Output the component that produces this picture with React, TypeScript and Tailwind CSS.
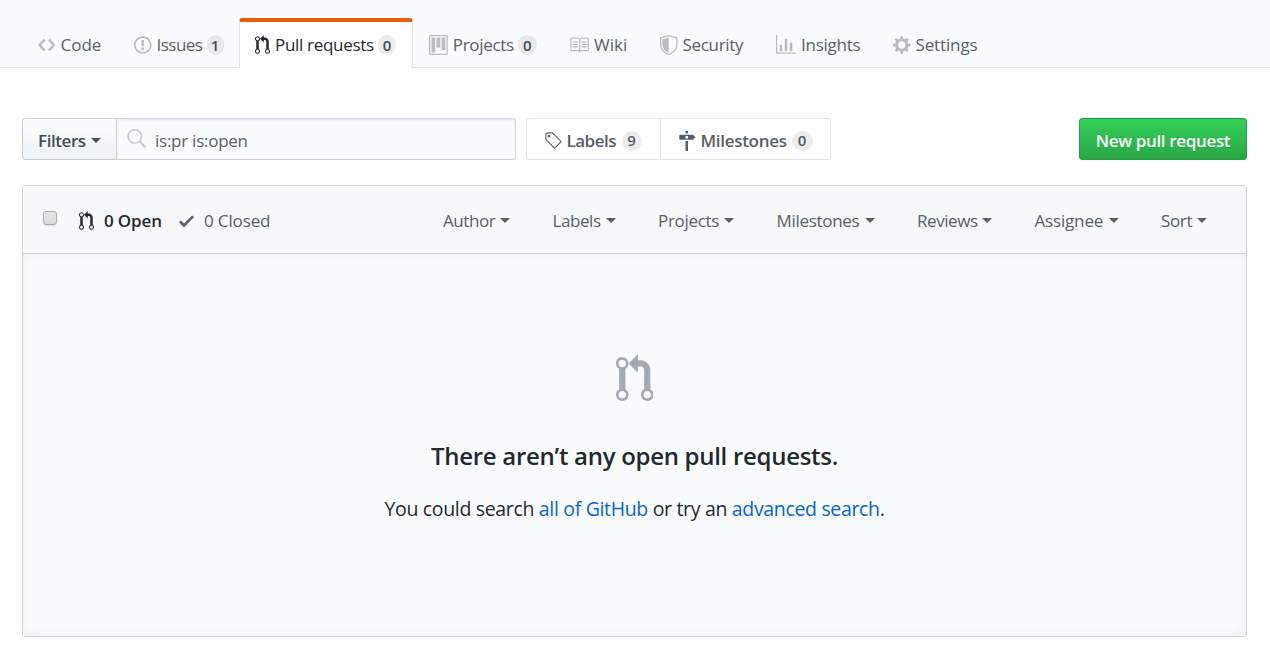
import React from 'react';

const ICONS = {
  code: { w: 14, d: 'M9.5 3L8 4.5 11.5 8 8 11.5 9.5 13 14 8 9.5 3zm-5 0L0 8l4.5 5L6 11.5 2.5 8 6 4.5 4.5 3z' },
  issue: { w: 14, d: 'M7 2.3c3.14 0 5.7 2.56 5.7 5.7s-2.56 5.7-5.7 5.7A5.71 5.71 0 0 1 1.3 8c0-3.14 2.56-5.7 5.7-5.7zM7 1C3.14 1 0 4.14 0 8s3.14 7 7 7 7-3.14 7-7-3.14-7-7-7zm1 3H6v5h2V4zm0 6H6v2h2v-2z' },
  pull: { w: 12, d: 'M11 11.28V5c-.03-.78-.34-1.47-.94-2.06C9.46 2.35 8.78 2.03 8 2H7V0L4 3l3 3V4h1c.27.02.48.11.69.31.21.2.3.42.31.69v6.28A1.993 1.993 0 0 0 10 15a1.993 1.993 0 0 0 1-3.72zm-1 2.92c-.66 0-1.2-.55-1.2-1.2 0-.65.55-1.2 1.2-1.2.65 0 1.2.55 1.2 1.2 0 .65-.55 1.2-1.2 1.2zM4 3c0-1.11-.89-2-2-2a1.993 1.993 0 0 0-1 3.72v6.56A1.993 1.993 0 0 0 2 15a1.993 1.993 0 0 0 1-3.72V4.72c.59-.34 1-.98 1-1.72zm-.8 10c0 .66-.55 1.2-1.2 1.2-.65 0-1.2-.55-1.2-1.2 0-.65.55-1.2 1.2-1.2.65 0 1.2.55 1.2 1.2zM2 4.2C1.34 4.2.8 3.65.8 3c0-.65.55-1.2 1.2-1.2.65 0 1.2.55 1.2 1.2 0 .65-.55 1.2-1.2 1.2z' },
  project: { w: 15, d: 'M10 12h3V2h-3v10zm-4-2h3V2H6v8zm-4 4h3V2H2v12zm-1 1h13V1H1v14zM14 0H1a1 1 0 0 0-1 1v14a1 1 0 0 0 1 1h13a1 1 0 0 0 1-1V1a1 1 0 0 0-1-1z' },
  book: { w: 16, d: 'M3 5h4v1H3V5zm0 3h4V7H3v1zm0 2h4V9H3v1zm11-5h-4v1h4V5zm0 2h-4v1h4V7zm0 2h-4v1h4V9zm2-6v9c0 .55-.45 1-1 1H9.5l-1 1-1-1H2c-.55 0-1-.45-1-1V3c0-.55.45-1 1-1h5.5l1 1 1-1H15c.55 0 1 .45 1 1zm-8 .5L7.5 3H2v9h6V3.5zm7-.5H9.5l-.5.5V12h6V3z' },
  shield: { w: 14, d: 'M0 2l7-2 7 2v6.02C14 12.69 8.69 16 7 16c-1.69 0-7-3.31-7-7.98V2zm1 .75L7 1l6 1.75v5.268C13 12.104 8.449 15 7 15c-1.449 0-6-2.896-6-6.982V2.75zm1 .75L7 2v12c-1.207 0-5-2.482-5-5.985V3.5z' },
  graph: { w: 16, d: 'M16 14v1H0V0h1v14h15zM5 13H3V8h2v5zm4 0H7V3h2v10zm4 0h-2V6h2v7z' },
  gear: { w: 14, d: 'M14 8.77v-1.6l-1.94-.64-.45-1.09.88-1.84-1.13-1.13-1.81.91-1.09-.45-.69-1.92h-1.6l-.63 1.94-1.11.45-1.84-.88-1.13 1.13.91 1.81-.45 1.09L0 7.23v1.59l1.94.64.45 1.09-.88 1.84 1.13 1.13 1.81-.91 1.09.45.69 1.92h1.59l.63-1.94 1.11-.45 1.84.88 1.13-1.13-.92-1.81.47-1.09L14 8.75v.02zM7 11c-1.66 0-3-1.34-3-3s1.34-3 3-3 3 1.34 3 3-1.34 3-3 3z' },
  tag: { w: 14, d: 'M7.685 1.72a2.49 2.49 0 0 0-1.76-.726H3.48A2.5 2.5 0 0 0 .994 3.48v2.456c0 .656.269 1.292.726 1.76l6.024 6.024a.99.99 0 0 0 1.402 0l4.563-4.563a.99.99 0 0 0 0-1.402L7.685 1.72zM2.366 7.048a1.54 1.54 0 0 1-.467-1.123V3.48c0-.874.716-1.58 1.58-1.58h2.456c.418 0 .825.159 1.123.467l6.104 6.094-4.702 4.702-6.094-6.114zm.626-4.066h1.989v1.989H2.982V2.982h.01z' },
  milestone: { w: 14, d: 'M8 2H6V0h2v2zm4 5H2c-.55 0-1-.45-1-1V4c0-.55.45-1 1-1h10l2 2-2 2zM8 4H6v2h2V4zM6 16h2V8H6v8z' },
  check: { w: 12, d: 'M12 5l-8 8-4-4 1.5-1.5L4 10l6.5-6.5L12 5z' },
  search: { w: 16, d: 'M15.7 13.3l-3.81-3.83A5.93 5.93 0 0 0 13 6c0-3.31-2.69-6-6-6S1 2.69 1 6s2.69 6 6 6c1.3 0 2.48-.41 3.47-1.11l3.83 3.81c.19.2.45.3.7.3.25 0 .52-.09.7-.3a.996.996 0 0 0 0-1.41v.01zM7 10.7c-2.59 0-4.7-2.11-4.7-4.7 0-2.59 2.11-4.7 4.7-4.7 2.59 0 4.7 2.11 4.7 4.7 0 2.59-2.11 4.7-4.7 4.7z' },
};

type IconName = keyof typeof ICONS;

function Icon({ name, size = 20, className = '' }: { name: IconName; size?: number; className?: string }) {
  const { w, d } = ICONS[name];
  return (
    <svg
      viewBox={`0 0 ${w} 16`}
      width={(w * size) / 16}
      height={size}
      fill="currentColor"
      fillRule="evenodd"
      className={`shrink-0 ${className}`}
      aria-hidden="true"
    >
      <path d={d} />
    </svg>
  );
}

function Counter({ value, className }: { value: number; className: string }) {
  return (
    <span className={`flex h-5 shrink-0 items-center justify-center rounded-full bg-[#1b1f23]/8 text-[15px] font-[550] leading-none ${className}`}>
      {value}
    </span>
  );
}

function Caret() {
  return <span className="h-0 w-0 shrink-0 border-x-5 border-t-5 border-x-transparent border-t-current" />;
}

type Tab = { label: string; icon: IconName; box: string; text: string; count?: number; badge?: string; active?: boolean };

const TABS: Tab[] = [
  { label: 'Code', icon: 'code', box: 'w-[96px]', text: 'w-[41px] tracking-normal' },
  { label: 'Issues', icon: 'issue', box: 'w-[121px]', text: 'w-[46px] tracking-[-0.03em]', count: 1, badge: 'w-[17px]' },
  { label: 'Pull requests', icon: 'pull', box: 'w-[174px]', text: 'w-[99px] tracking-[-0.018em]', count: 0, badge: 'w-[18px]', active: true },
  { label: 'Projects', icon: 'project', box: 'w-[140px]', text: 'w-[61px] tracking-[-0.018em]', count: 0, badge: 'w-[19px]' },
  { label: 'Wiki', icon: 'book', box: 'w-[91px]', text: 'w-[34px]' },
  { label: 'Security', icon: 'shield', box: 'w-[116px]', text: 'w-[62px] tracking-[-0.018em]' },
  { label: 'Insights', icon: 'graph', box: 'w-[117px]', text: 'w-[60px] tracking-[-0.015em]' },
  { label: 'Settings', icon: 'gear', box: 'w-[117px]', text: 'w-[62px] tracking-[-0.008em]' },
];

const FILTERS = [
  { label: 'Author', text: 'w-[52px] tracking-[-0.025em]' },
  { label: 'Labels', text: 'w-[48px] tracking-[-0.025em]' },
  { label: 'Projects', text: 'w-[61px] tracking-[-0.018em]' },
  { label: 'Milestones', text: 'w-[83px] tracking-[-0.018em]' },
  { label: 'Reviews', text: 'w-[60px] tracking-[-0.025em]' },
  { label: 'Assignee', text: 'w-[69px] tracking-[-0.01em]' },
  { label: 'Sort', text: 'w-[31px] tracking-[-0.02em]' },
];

export default function App() {
  return (
    <div className="h-[655px] w-full overflow-hidden bg-white font-['Open_Sans',sans-serif] text-[17px] leading-[26px] font-[370] whitespace-nowrap text-[#24292e]">
      <nav className="flex h-[68px] items-end border-b border-[#e1e4e8] bg-[#fafbfc] pl-[22px]">
        {TABS.map((t) => (
          <a
            key={t.label}
            className={`-mb-px flex h-[50px] items-center ${t.box} ${
              t.active
                ? 'rounded-t-[3px] border-x border-t-4 border-x-[#e1e4e8] border-t-[#e36209] bg-white pl-[15px] text-[#24292e]'
                : 'pt-1 pl-4 text-[#586069]'
            }`}
          >
            <Icon name={t.icon} className={t.active ? '' : 'text-[#586069]/40'} />
            <span className={`ml-[5px] shrink-0 ${t.text}`}>{t.label}</span>
            {t.count !== undefined && <Counter value={t.count} className={`ml-1 text-[#444d56] ${t.badge}`} />}
          </a>
        ))}
      </nav>

      <main className="px-[22px] pt-[50px] pr-[23px]">
        <div className="flex h-[42px] font-semibold">
          <button className="flex w-[95px] items-center gap-[5px] rounded-l-[3px] border border-[#c9cdd2] bg-linear-to-b from-[#fafbfc] to-[#eff3f6] pt-[3px] pl-[15px] text-[#444d56]">
            <span className="w-[48px] text-left tracking-[-0.025em]">Filters</span>
            <Caret />
          </button>
          <div className="flex w-[399px] rounded-r-[3px] border border-l-0 border-[#d1d5da] bg-[#fafbfc] pl-[9px] font-[370] text-[#586069] shadow-[inset_0_1px_2px_rgba(27,31,35,0.075)]">
            <Icon name="search" className="mt-[10px] text-[#c6cbd1]" />
            <span className="ml-[9px] self-center pt-[3px] tracking-[-0.015em]">is:pr is:open</span>
          </div>

          <div className="ml-[10px] flex w-[305px] rounded-[3px] border border-[#e1e4e8] text-[#586069]">
            <a className="flex w-[134px] items-center border-r border-[#e1e4e8] pt-[3px] pl-[17px]">
              <Icon name="tag" />
              <span className="ml-[5px] w-[50px] tracking-[-0.03em]">Labels</span>
              <Counter value={9} className="ml-[5px] w-[20px]" />
            </a>
            <a className="flex items-center pt-[3px] pl-[17px]">
              <Icon name="milestone" />
              <span className="ml-[5px] w-[87px] tracking-[-0.018em]">Milestones</span>
              <Counter value={0} className="ml-1 w-[21px]" />
            </a>
          </div>

          <button className="ml-auto w-[168px] rounded-[3px] border border-[#269f42] bg-linear-to-b from-[#34d058] to-[#28a745] pt-[3px] text-center tracking-[-0.02em] text-white">
            New pull request
          </button>
        </div>

        <section className="mt-[25px] flex h-[452px] flex-col rounded-[3px] border border-[#d1d5da]">
          <header className="flex h-[68px] items-center border-b border-[#d1d5da] bg-[#f6f8fa] pt-0.5 pr-[39px] pl-[20px] text-[#586069]">
            <span className="-mt-[5px] h-[14px] w-[14px] rounded-[3px] border border-[#adadad] bg-linear-to-b from-[#e8e8e8] to-[#d8d8d8] shadow-[0_1px_1px_rgba(0,0,0,0.08)]" />
            <Icon name="pull" className="ml-[22px] text-[#24292e]" />
            <span className="ml-[10px] w-[58px] font-semibold tracking-[-0.008em] text-[#24292e]">0 Open</span>
            <Icon name="check" className="ml-[17px]" />
            <span className="ml-[10px] tracking-[-0.008em]">0 Closed</span>
            <div className="ml-auto flex gap-[42.5px]">
              {FILTERS.map((f) => (
                <span key={f.label} className="flex items-center gap-[5px]">
                  <span className={f.text}>{f.label}</span>
                  <Caret />
                </span>
              ))}
            </div>
          </header>

          <div className="flex flex-1 flex-col items-center bg-[#fafbfc] pt-[100px] shadow-[inset_0_0_12px_rgba(27,31,35,0.06)]">
            <Icon name="pull" size={50} className="text-[#a3aab1]" />
            <h3 className="mt-[33px] text-[24px] leading-[38px] font-semibold tracking-[-0.012em]">There aren’t any open pull requests.</h3>
            <p className="mt-[19px] text-[19.5px] leading-[30px] tracking-[-0.017em]">
              You could search <a className="text-[#0366d6]">all of GitHub</a> or try an{' '}
              <a className="text-[#0366d6]">advanced search</a>.
            </p>
          </div>
        </section>
      </main>
    </div>
  );
}
